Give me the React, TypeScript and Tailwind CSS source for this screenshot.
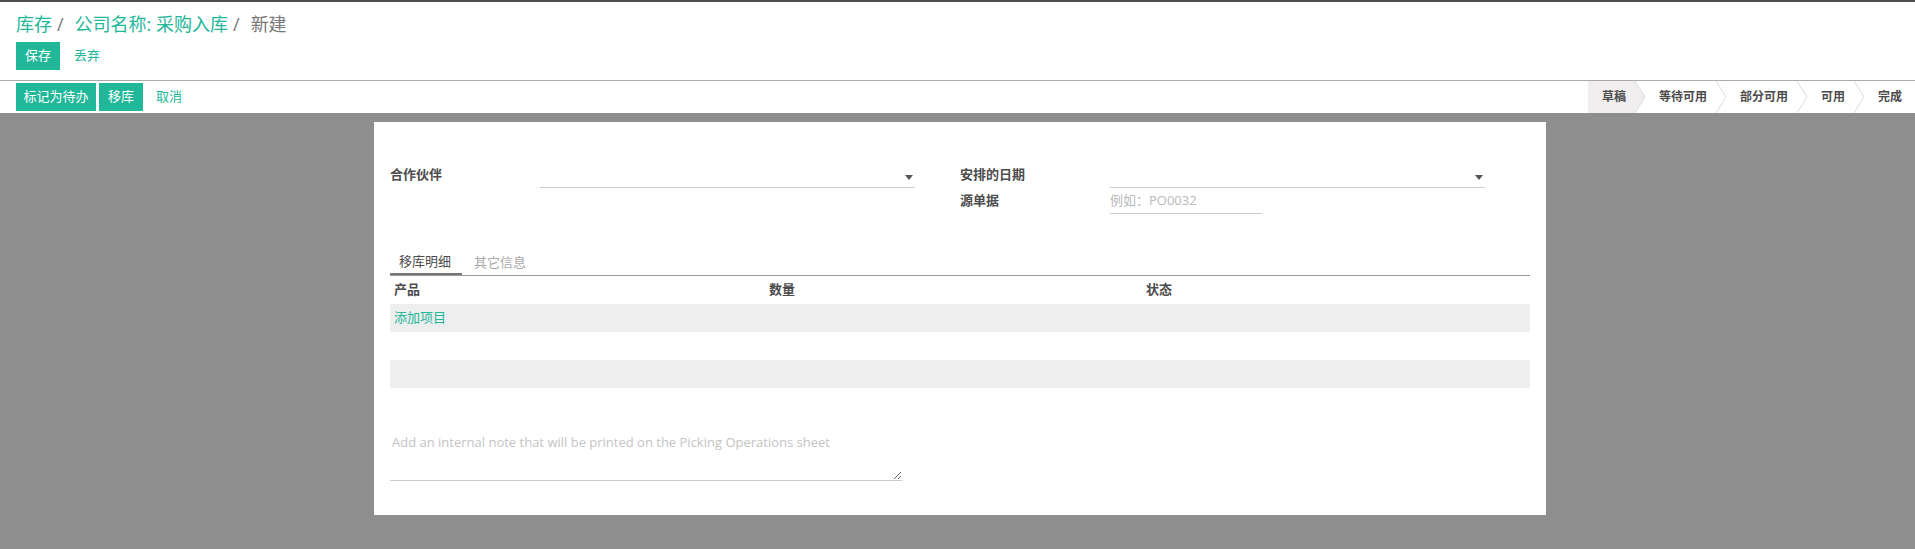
import React from "react";

const font = { fontFamily: '"Open Sans", "Noto Sans CJK SC", sans-serif' };

const steps = ["草稿", "等待可用", "部分可用", "可用", "完成"];

function Chevron({ active }: { active: boolean }) {
  return (
    <svg width="10" height="32" viewBox="0 0 10 32" className="block shrink-0">
      {active && <polygon points="0,0 10,16 0,32" fill="#f0eeee" />}
      <polyline points="0,0 10,16 0,32" fill="none" stroke="#dcdcdc" strokeWidth="1" />
    </svg>
  );
}

function Caret() {
  return (
    <svg width="8" height="5" viewBox="0 0 8 5" className="block">
      <polygon points="0,0 8,0 4,5" fill="#555" />
    </svg>
  );
}

export default function App() {
  return (
    <div style={font} className="h-[549px] w-full overflow-hidden flex flex-col bg-[#8e8e8e] text-[13px] text-[#4c4c4c]">
      {/* Control panel */}
      <div className="bg-white border-t-[2px] border-[#4c4c4a] border-b border-b-[#aaaaaa] px-[16px] pt-[9px] pb-[10px]">
        <div className="flex items-center h-[26px] text-[18px] leading-[26px]">
          <span className="text-[#21b799]">库存</span>
          <span className="ml-[5px] mr-[11px] text-[#777]">/</span>
          <span className="text-[#21b799]">公司名称: 采购入库</span>
          <span className="ml-[5px] mr-[11px] text-[#777]">/</span>
          <span className="text-[#777]">新建</span>
        </div>
        <div className="flex items-center mt-[5px] h-[28px]">
          <button className="h-[28px] w-[44px] bg-[#21b799] text-white text-[13px]">保存</button>
          <button className="ml-[14px] text-[#21b799] text-[13px]">丢弃</button>
        </div>
      </div>

      {/* Status bar row */}
      <div className="bg-white h-[32px] flex items-start justify-between pl-[16px]">
        <div className="flex items-center mt-[2px] gap-[3px]">
          <button className="h-[28px] w-[80px] bg-[#21b799] text-white text-[13px]">标记为待办</button>
          <button className="h-[28px] w-[44px] bg-[#21b799] text-white text-[13px]">移库</button>
          <button className="ml-[10px] text-[#21b799] text-[13px]">取消</button>
        </div>
        <div className="flex h-[32px] text-[12px] font-semibold text-[#4c4c4c]">
          {steps.map((s, i) => {
            const active = i === 0;
            const last = i === steps.length - 1;
            return (
              <div key={s} className="flex h-[32px]">
                <div className={`flex items-center pl-[14px] ${last ? "pr-[13px]" : "pr-[9px]"} ${active ? "bg-[#f0eeee]" : ""}`}>
                  {s}
                </div>
                {!last && <Chevron active={active} />}
              </div>
            );
          })}
        </div>
      </div>

      {/* Sheet */}
      <div className="pt-[9px]">
        <div className="ml-[374px] w-[1172px] h-[393px] bg-white px-[16px] pt-[40px]">
          <div className="grid grid-cols-2">
            <div className="flex flex-col">
              <div className="flex h-[26px]">
                <div className="w-[150px] flex items-center font-bold">合作伙伴</div>
                <div className="w-[375px] border-b border-[#cccccc] flex items-center justify-end pt-[6px] pr-[2px]">
                  <Caret />
                </div>
              </div>
            </div>
            <div className="flex flex-col">
              <div className="flex h-[26px]">
                <div className="w-[150px] flex items-center font-bold">安排的日期</div>
                <div className="w-[375px] border-b border-[#cccccc] flex items-center justify-end pt-[6px] pr-[2px]">
                  <Caret />
                </div>
              </div>
              <div className="flex h-[26px]">
                <div className="w-[150px] flex items-center font-bold">源单据</div>
                <input
                  className="w-[152px] border-b border-[#cccccc] outline-none text-[13px] placeholder:text-[#b9b9b9] bg-transparent"
                  placeholder="例如：PO0032"
                />
              </div>
            </div>
          </div>

          {/* Tabs */}
          <div className="mt-[36px] flex border-b border-[#999999]">
            <div className="h-[25px] pl-[9px] pr-[11px] flex items-center border-b-2 border-[#777777] -mb-px">移库明细</div>
            <div className="h-[25px] px-[12px] flex items-center text-[#aaaaaa]">其它信息</div>
          </div>

          {/* Table */}
          <div className="grid grid-cols-[375px_377px_1fr] h-[28px] items-center font-bold pl-[4px]">
            <div>产品</div>
            <div>数量</div>
            <div>状态</div>
          </div>
          <div className="h-[28px] bg-[#edeeed] flex items-center pl-[4px] text-[#21b799]">添加项目</div>
          <div className="h-[28px]" />
          <div className="h-[28px] bg-[#edeeed]" />

          {/* Note */}
          <textarea
            className="mt-[43px] block w-[512px] h-[50px] border-b border-[#cccccc] outline-none pl-[2px] leading-[22px] text-[13px] placeholder:text-[#c4c4c4] bg-transparent"
            placeholder="Add an internal note that will be printed on the Picking Operations sheet"
          />
        </div>
      </div>
    </div>
  );
}
